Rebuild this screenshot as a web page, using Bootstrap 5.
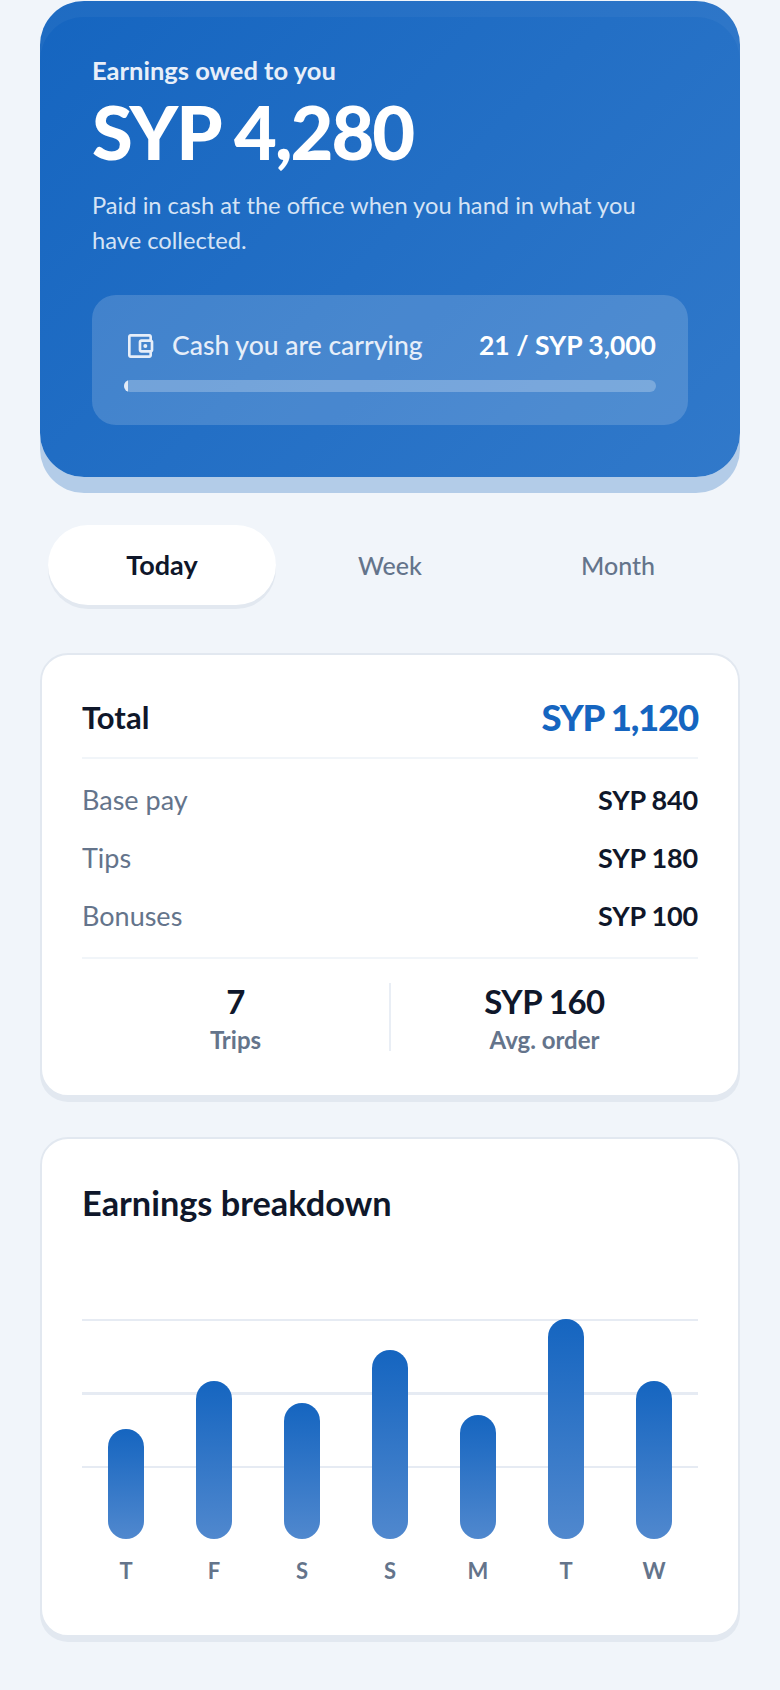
<!DOCTYPE html>
<html lang="en">
<head>
    <meta charset="UTF-8">
    <meta name="viewport" content="width=device-width, initial-scale=1.0">
    <title>Earnings</title>
    <link href="https://cdn.jsdelivr.net/npm/bootstrap@5.3.0/dist/css/bootstrap.min.css" rel="stylesheet">
    <style>
        body {
            background: #f1f5fa;
            color: #0f172a;
            font-family: Lato, "Liberation Sans", sans-serif;
        }
        .page-wrap { width: 780px; padding: 1px 40px 48px; }

        /* hero */
        .hero-card {
            height: 476px;
            padding: 51px 52px 0;
            border-radius: 44px;
            background: linear-gradient(135deg, #1565c0, #3179ca);
            box-shadow: 0 16px 0 #b3cce8, inset 0 16px 0 rgba(255, 255, 255, .04);
            color: #fff;
        }
        .hero-label { font-size: 25.5px; font-weight: 700; line-height: 36px; color: #e8eff9; }
        .hero-amount { font-size: 74px; font-weight: 900; line-height: 86px; letter-spacing: -2px; margin-top: 1px; }
        .hero-note { font-size: 23.7px; line-height: 34.5px; margin-top: 13px; color: #d5e3f5; }
        .cash-panel {
            margin-top: 38px;
            height: 130px;
            padding: 32px 32px 0;
            border-radius: 24px;
            background: rgba(255, 255, 255, .16);
        }
        .cash-label { font-size: 26.5px; font-weight: 500; line-height: 37px; color: #e6eef9; }
        .cash-value { font-size: 26.5px; font-weight: 700; line-height: 37px; }
        .cash-bar { height: 12px; margin-top: 16px; border-radius: 6px; background: rgba(255, 255, 255, .25); }
        .cash-bar .progress-bar { background: #e2ebf7; }

        /* period tabs */
        .period-tabs { margin: 48px 8px 0; }
        .period-tabs .nav-link {
            height: 80px;
            border-radius: 40px;
            font-size: 25px;
            font-weight: 500;
            line-height: 64px;
            color: #64748b;
        }
        .period-tabs .nav-link.active {
            background: #fff;
            color: #0f172a;
            font-size: 27px;
            font-weight: 700;
            box-shadow: 0 4px 0 #e2e8f0;
        }

        /* cards */
        .info-card {
            border: 2px solid #e2e8f0;
            border-radius: 28px;
            box-shadow: 0 5px 0 #e2e8f0;
            padding: 40px;
        }
        .total-card { margin-top: 48px; height: 444px; padding-top: 36px; }
        .total-label { font-size: 31px; font-weight: 700; }
        .total-value { font-size: 36.5px; font-weight: 900; color: #1565c0; letter-spacing: -1.2px; }
        .total-head { height: 68px; padding-bottom: 14px; border-bottom: 2px solid #f1f5f9; }
        .pay-rows { padding: 12px 0 12px; border-bottom: 2px solid #f1f5f9; }
        .pay-row { height: 58px; font-size: 27px; color: #64748b; }
        .pay-row b { font-size: 27px; font-weight: 700; color: #0f172a; letter-spacing: -.2px; }
        .stat-col { height: 68px; line-height: 1; }
        .stat-col + .stat-col { border-left: 2px solid #e9eef5; }
        .stat-value { font-size: 33px; font-weight: 700; line-height: 40px; margin-top: -2px; letter-spacing: -.5px; }
        .stat-label { font-size: 24px; font-weight: 700; color: #64748b; line-height: 30px; margin-top: 4px; }

        .chart-card { margin-top: 40px; height: 500px; }
        .chart-title { font-size: 34.3px; font-weight: 700; line-height: 48px; margin: 0; }
        .chart-area {
            height: 220px;
            margin-top: 92px;
            align-items: flex-end;
            background: repeating-linear-gradient(#e6ebf3 0 2px, transparent 2px 73.5px);
        }
        .bar-col { flex: 1 1 0; display: flex; justify-content: center; }
        .bar-fill {
            width: 36px;
            border-radius: 18px;
            background: linear-gradient(#1565c0, #5088ce);
        }
        .day-labels { margin-top: 15px; }
        .day-labels span {
            flex: 1 1 0;
            text-align: center;
            font-size: 22px;
            font-weight: 700;
            color: #64748b;
        }
    </style>
</head>
<body>
    <div class="page-wrap">
        <!-- hero -->
        <div class="hero-card">
            <div class="hero-label">Earnings owed to you</div>
            <div class="hero-amount">SYP 4,280</div>
            <div class="hero-note">Paid in cash at the office when you hand in what you have collected.</div>
            <div class="cash-panel">
                <div class="d-flex justify-content-between align-items-center">
                    <div class="d-flex align-items-center gap-3 cash-label">
                        <svg width="32" height="32" viewBox="0 0 24 24" fill="#e6eef9">
                            <path d="M21 7.28V5c0-1.1-.9-2-2-2H5c-1.11 0-2 .9-2 2v14c0 1.1.89 2 2 2h14c1.1 0 2-.9 2-2v-2.28c.59-.35 1-.98 1-1.72V9c0-.74-.41-1.37-1-1.72zM20 9v6h-7V9h7zM5 19V5h14v2h-6c-1.1 0-2 .9-2 2v6c0 1.1.9 2 2 2h6v2H5z"/>
                            <circle cx="16" cy="12" r="1.5"/>
                        </svg>
                        <span>Cash you are carrying</span>
                    </div>
                    <div class="cash-value">21 / SYP 3,000</div>
                </div>
                <div class="progress cash-bar">
                    <div class="progress-bar" role="progressbar" style="width: 0.7%"></div>
                </div>
            </div>
        </div>

        <!-- tabs -->
        <ul class="nav nav-pills nav-justified period-tabs">
            <li class="nav-item"><a class="nav-link active" href="#">Today</a></li>
            <li class="nav-item"><a class="nav-link" href="#">Week</a></li>
            <li class="nav-item"><a class="nav-link" href="#">Month</a></li>
        </ul>

        <!-- totals -->
        <div class="card info-card total-card">
            <div class="d-flex justify-content-between align-items-center total-head">
                <span class="total-label">Total</span>
                <span class="total-value">SYP 1,120</span>
            </div>
            <div class="pay-rows">
                <div class="d-flex justify-content-between align-items-center pay-row"><span>Base pay</span><b>SYP 840</b></div>
                <div class="d-flex justify-content-between align-items-center pay-row"><span>Tips</span><b>SYP 180</b></div>
                <div class="d-flex justify-content-between align-items-center pay-row"><span>Bonuses</span><b>SYP 100</b></div>
            </div>
            <div class="row g-0 text-center mt-4">
                <div class="col stat-col">
                    <div class="stat-value">7</div>
                    <div class="stat-label">Trips</div>
                </div>
                <div class="col stat-col">
                    <div class="stat-value">SYP 160</div>
                    <div class="stat-label">Avg. order</div>
                </div>
            </div>
        </div>

        <!-- chart -->
        <div class="card info-card chart-card">
            <h2 class="chart-title">Earnings breakdown</h2>
            <div class="d-flex chart-area">
                <div class="bar-col"><div class="bar-fill" style="height: 110px"></div></div>
                <div class="bar-col"><div class="bar-fill" style="height: 158px"></div></div>
                <div class="bar-col"><div class="bar-fill" style="height: 136px"></div></div>
                <div class="bar-col"><div class="bar-fill" style="height: 189px"></div></div>
                <div class="bar-col"><div class="bar-fill" style="height: 124px"></div></div>
                <div class="bar-col"><div class="bar-fill" style="height: 220px"></div></div>
                <div class="bar-col"><div class="bar-fill" style="height: 158px"></div></div>
            </div>
            <div class="d-flex day-labels">
                <span>T</span><span>F</span><span>S</span><span>S</span><span>M</span><span>T</span><span>W</span>
            </div>
        </div>
    </div>
    <script src="https://cdn.jsdelivr.net/npm/bootstrap@5.3.0/dist/js/bootstrap.bundle.min.js"></script>
</body>
</html>
